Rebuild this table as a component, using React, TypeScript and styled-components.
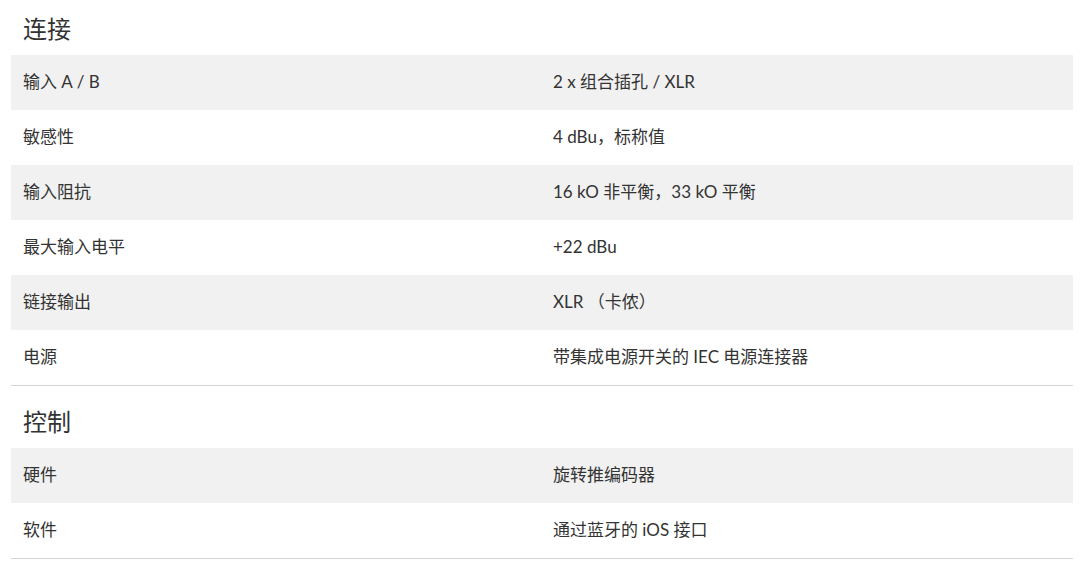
import React from 'react';
import styled, { createGlobalStyle } from 'styled-components';

const GlobalStyle = createGlobalStyle`
  body {
    margin: 0;
    background: #fff;
    font-family: Lato, "Noto Sans CJK SC", sans-serif;
    color: #333;
  }
`

interface Spec {
  label: string
  value: string
}

interface SectionData {
  title: string
  rows: Spec[]
}

const sections: SectionData[] = [
  {
    title: '连接',
    rows: [
      { label: '输入 A / B', value: '2 x 组合插孔 / XLR' },
      { label: '敏感性', value: '4 dBu，标称值' },
      { label: '输入阻抗', value: '16 kO 非平衡，33 kO 平衡' },
      { label: '最大输入电平', value: '+22 dBu' },
      { label: '链接输出', value: 'XLR （卡侬）' },
      { label: '电源', value: '带集成电源开关的 IEC 电源连接器' },
    ],
  },
  {
    title: '控制',
    rows: [
      { label: '硬件', value: '旋转推编码器' },
      { label: '软件', value: '通过蓝牙的 iOS 接口' },
    ],
  },
];

export default function App() {
  return (
    <>
      <GlobalStyle />
      <Page>
        {sections.map((s, i) => (
          <Section key={s.title}>
            <Title first={i === 0}>{s.title}</Title>
            <Table>
              {s.rows.map((r, j) => (
                <Row key={r.label} shaded={j % 2 === 0}>
                  <Label>{r.label}</Label>
                  <Value>{r.value}</Value>
                </Row>
              ))}
            </Table>
          </Section>
        ))}
      </Page>
    </>
  );
}

const Page = styled.div`
  padding: 0 12px 0 11px;
`

const Section = styled.section`
  border-bottom: 1px solid #d6d6d6;
`

const Title = styled.h2<{ first?: boolean }>`
  margin: 0;
  height: ${p => (p.first ? 55 : 62)}px;
  padding: ${p => (p.first ? '15px' : '22px')} 12px 0;
  box-sizing: border-box;
  font-size: 24px;
  font-weight: 400;
  line-height: 28px;
  color: #333;
`

const Table = styled.div`
  display: flex;
  flex-direction: column;
`

const Row = styled.div<{ shaded?: boolean }>`
  display: grid;
  grid-template-columns: 1fr 1fr;
  height: 55px;
  align-items: center;
  background: ${p => (p.shaded ? '#f1f1f1' : '#fff')};
`

const Label = styled.div`
  padding: 0 12px 2px;
  font-size: 17px;
  line-height: 20px;
  color: #333;
`

const Value = styled(Label)`
  padding-left: 11px;
`
